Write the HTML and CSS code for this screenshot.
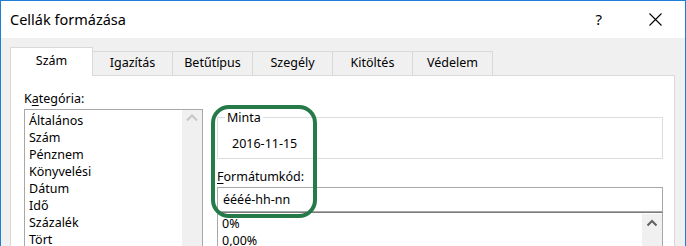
FILE: index.html
```html
<!DOCTYPE html>
<html lang="hu">
<head>
<meta charset="utf-8">
<title>Cellák formázása</title>
<link rel="stylesheet" href="styles.css">
</head>
<body>
<div class="window">
  <div class="titlebar">
    <span class="title">Cellák formázása</span>
    <span class="help">?</span>
    <svg class="close" width="13" height="13" viewBox="0 0 13 13"><path d="M0.5 0.5 L12.5 12.5 M12.5 0.5 L0.5 12.5" stroke="#000" stroke-width="1.1" fill="none"/></svg>
  </div>
  <div class="tabs">
    <div class="tab active">Szám</div>
    <div class="tab">Igazítás</div>
    <div class="tab">Betűtípus</div>
    <div class="tab">Szegély</div>
    <div class="tab">Kitöltés</div>
    <div class="tab">Védelem</div>
  </div>
  <div class="panel">
    <div class="col-left">
      <div class="label">K<u>a</u>tegória:</div>
      <div class="listbox">
        <ul class="items">
          <li>Általános</li>
          <li>Szám</li>
          <li>Pénznem</li>
          <li>Könyvelési</li>
          <li>Dátum</li>
          <li>Idő</li>
          <li>Százalék</li>
          <li>Tört</li>
        </ul>
        <div class="scrollbar">
          <svg width="12" height="8" viewBox="0 0 12 8"><path d="M1 6.5 L6 1.5 L11 6.5" stroke="#c6c6c6" stroke-width="2" fill="none"/></svg>
        </div>
      </div>
    </div>
    <div class="col-right">
      <fieldset class="sample">
        <legend>Minta</legend>
        <div class="sample-value">2016-11-15</div>
      </fieldset>
      <div class="label format-label"><u>F</u>ormátumkód:</div>
      <div class="input">éééé-hh-nn</div>
      <div class="formatlist">
        <ul class="items">
          <li>0%</li>
          <li>0,00%</li>
        </ul>
        <div class="scrollbar dark">
          <svg width="12" height="8" viewBox="0 0 12 8"><path d="M1.5 6.5 L6 2 L10.5 6.5" stroke="#606060" stroke-width="2" fill="none"/></svg>
        </div>
      </div>
    </div>
    <div class="highlight"></div>
  </div>
</div>
</body>
</html>
```
FILE: styles.css
```css
html, body {
  margin: 0;
  padding: 0;
}
body {
  width: 686px;
  height: 246px;
  overflow: hidden;
  font-family: "Noto Sans", "Open Sans", sans-serif;
  font-size: 12px;
  color: #000;
  background: #f0f0f0;
}
.window {
  box-sizing: border-box;
  width: 686px;
  height: 246px;
  border: 1px solid #1c7ed6;
  border-bottom: none;
  background: #f0f0f0;
  overflow: hidden;
}
.titlebar {
  height: 37px;
  background: #fff;
  display: flex;
  align-items: center;
}
.title {
  font-size: 14.5px;
  padding-left: 9px;
  flex: 1;
  margin-top: -2px;
}
.help {
  font-size: 15px;
  margin-right: 47px;
  margin-top: -2px;
}
.close {
  margin-right: 23px;
  margin-top: -1px;
}
.tabs {
  display: flex;
  align-items: flex-end;
  margin-left: 9px;
  margin-top: 9px;
  height: 28px;
  position: relative;
  z-index: 2;
}
.tab {
  box-sizing: border-box;
  width: 81px;
  height: 24px;
  border: 1px solid #d9d9d9;
  border-bottom: none;
  margin-left: -1px;
  text-align: center;
  line-height: 22px;
  font-size: 12.5px;
  background: #f0f0f0;
}
.tab.active {
  margin-left: 0;
  width: 83px;
  height: 29px;
  margin-bottom: -1px;
  background: #fff;
  line-height: 26px;
}
.panel {
  position: relative;
  background: #fff;
  border: 1px solid #d9d9d9;
  margin: 0 10px 0 9px;
  height: 200px;
  display: flex;
  gap: 14px;
  padding: 14px 11px 0 13px;
}
.label {
  line-height: 17px;
  font-size: 12.5px;
}
.label u {
  text-underline-offset: 2px;
}
.col-left {
  width: 179px;
  flex: none;
}
.listbox {
  margin-top: 2px;
  box-sizing: border-box;
  height: 140px;
  border: 1px solid #a8a8a8;
  display: flex;
}
.items {
  list-style: none;
  margin: 0;
  padding: 2px 0 0 4px;
  flex: 1;
  font-size: 12.5px;
  line-height: 17px;
}
.scrollbar {
  width: 20px;
  background: #f0f0f0;
  display: flex;
  justify-content: center;
  padding-top: 4px;
  box-sizing: border-box;
}
.col-right {
  flex: 1;
}
.sample {
  margin: 19px 0 0 0;
  padding: 0;
  border: 1px solid #dcdcdc;
  height: 50px;
  box-sizing: border-box;
}
.sample legend {
  margin-left: 7px;
  padding: 0 2px;
  font-size: 12.5px;
  line-height: 17px;
}
.sample-value {
  padding-left: 14px;
  margin-top: 9px;
  font-size: 12.5px;
  line-height: 17px;
}
.format-label {
  margin-top: 9px;
}
.input {
  margin-top: 2px;
  box-sizing: border-box;
  height: 25px;
  border: 1px solid #a8a8a8;
  padding-left: 5px;
  line-height: 23px;
  font-size: 12.5px;
}
.formatlist {
  box-sizing: border-box;
  height: 60px;
  border: 1px solid #a8a8a8;
  border-top: 1px solid #7a7a7a;
  display: flex;
}
.formatlist .items {
  padding: 2px 0 0 4px;
}
.formatlist .scrollbar {
  margin-top: 1px;
  padding-top: 5px;
}
.highlight {
  position: absolute;
  left: 200px;
  top: 29px;
  width: 106px;
  height: 113px;
  box-sizing: border-box;
  border: 4px solid #267a4a;
  border-radius: 18px;
}
```
